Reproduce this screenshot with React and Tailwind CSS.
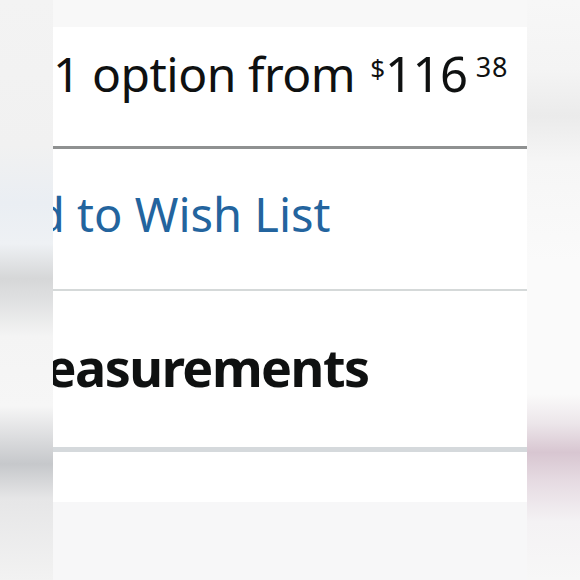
export default function App() {
  return (
    <div className="flex h-[580px] w-[580px] overflow-hidden bg-white" style={{ fontFamily: '"Noto Sans", "Open Sans", sans-serif' }}>
      <div className="h-full w-[53px] shrink-0 bg-[linear-gradient(to_bottom,#f3f3f3_0%,#f1f1f1_25%,#eaeef3_35%,#eef1f4_42%,#d6d7d8_48%,#e0e1e2_52%,#f4f4f4_58%,#f6f6f6_70%,#d9dadc_76%,#c6c8cb_80%,#e6e6e7_86%,#f2f2f2_100%)]" />
      <div className="flex h-full w-[474px] shrink-0 flex-col">
        <div className="h-[27px] shrink-0 bg-[#f8f8f8]" />
        <div className="flex h-[475px] shrink-0 flex-col bg-white">
          <div className="flex h-[119px] shrink-0 items-start overflow-hidden pt-[18px]">
            <div className="whitespace-nowrap text-[48px] leading-[56px] tracking-[-0.5px] text-[#0f1111]">
              1 option from <span className="relative top-[-14px] ml-[3px] text-[26px] tracking-normal">$</span><span className="text-[49px]">116</span><span className="relative top-[-15px] ml-[8px] text-[27px] tracking-[1px]">38</span>
            </div>
          </div>
          <div className="h-[3px] shrink-0 bg-[#8f9191]" />
          <div className="flex h-[140px] shrink-0 items-start overflow-hidden pt-[37px]">
            <div className="ml-[-76px] whitespace-nowrap text-[47px] leading-[56px] text-[#23649e]">Add to Wish List</div>
          </div>
          <div className="h-[2px] shrink-0 bg-[#d5d9d9]" />
          <div className="flex h-[156px] shrink-0 items-start overflow-hidden pt-[46px]">
            <div className="ml-[-55px] whitespace-nowrap text-[52px] font-bold leading-[60px] tracking-[-1.5px] text-[#0f1111]">Measurements</div>
          </div>
          <div className="h-[5px] shrink-0 bg-[#d5d9dc]" />
          <div className="flex-1 bg-white" />
        </div>
        <div className="flex-1 bg-[#f7f7f8]" />
      </div>
      <div className="h-full w-[53px] shrink-0 bg-[linear-gradient(to_bottom,#f7f7f7_0%,#f4f4f4_12%,#ebebeb_20%,#f6f6f6_28%,#fafafa_45%,#fafafa_68%,#ece6ea_73%,#d8c6d1_78%,#e6dbe2_83%,#f4f2f4_90%,#f7f7f7_100%)]" />
    </div>
  );
}
